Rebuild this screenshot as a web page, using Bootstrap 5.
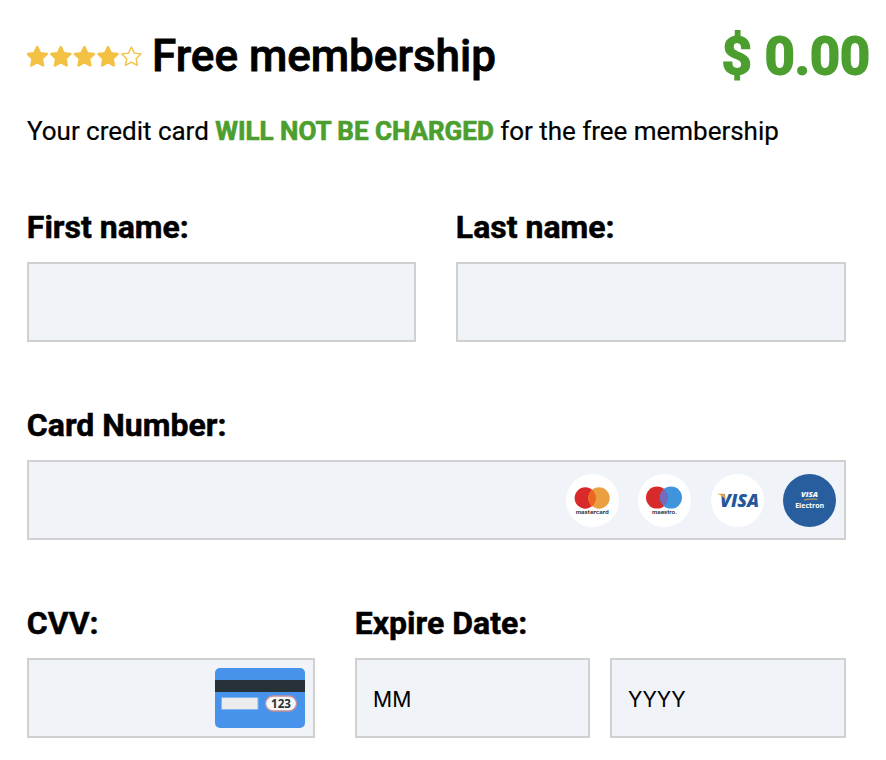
<!DOCTYPE html>
<html lang="en">
<head>
<meta charset="utf-8">
<meta name="viewport" content="width=device-width, initial-scale=1">
<title>Free membership</title>
<link href="https://cdn.jsdelivr.net/npm/bootstrap@5.3.0/dist/css/bootstrap.min.css" rel="stylesheet">
<style>
body { font-family: Roboto, sans-serif; color: #000; background: #fff; }
.page { width: 886px; height: 760px; padding: 26px 16px 0 27px; overflow: hidden; }
.head-row { height: 60px; }
.title { font-size: 44px; font-weight: 500; line-height: 60px; margin-left: 8px; -webkit-text-stroke: .8px; }
.price { font-size: 52.3px; font-weight: 700; line-height: 60px; -webkit-text-stroke: 1.8px; }
.green { color: #4c9f2f; }
.note b { -webkit-text-stroke: .7px; }
.note { font-size: 26px; line-height: 36px; margin-top: 27px; letter-spacing: -.02px; -webkit-text-stroke: .2px; }
.fields { width: 819px; }
.field-label { display: block; font-size: 32px; font-weight: 700; line-height: 40px; margin-bottom: 15px; white-space: nowrap; margin-left: -.2px; -webkit-text-stroke: .5px; }
.name-col { width: 389px; }
.names-row { margin-top: 58px; }
.next-row { margin-top: 63px; }
.field-row { gap: 40px; }
.date-row { gap: 20px; }
.box { height: 80px; border: 2px solid #d0d0d1; border-radius: 0; background: #f0f3f8; padding: 2px 16px 0; color: #000; font: 400 21.2px Inter, sans-serif; }
.box::placeholder { color: #000; opacity: 1; }
.box:focus { background: #f0f3f8; border-color: #9aa4b2; box-shadow: none; }
.brands { top: 13.5px; right: 10px; gap: 19.5px; }
.cvv-art { top: 10px; right: 10px; }
.cvv-col { width: 288px; }
.month-box { width: 235px; }
</style>
</head>
<body>
<svg width="0" height="0" class="position-absolute" aria-hidden="true">
  <symbol id="star" viewBox="0 0 24 24"><path d="M12 2.2 14.9 8.3 21.6 9.2 16.7 13.9 17.9 20.6 12 17.4 6.1 20.6 7.3 13.9 2.4 9.2 9.1 8.3Z" stroke-linejoin="round"/></symbol>
</svg>
<main class="page">
  <header class="head-row d-flex align-items-center">
    <svg width="117" height="26" viewBox="0 0 117 26" fill="#f3c143" stroke="#f3c143" stroke-width="2.4" role="img" aria-label="4 of 5 stars">
      <use href="#star" x="-1.8" y="1.8" width="24" height="24"/>
      <use href="#star" x="21.8" y="1.8" width="24" height="24"/>
      <use href="#star" x="45.4" y="1.8" width="24" height="24"/>
      <use href="#star" x="69" y="1.8" width="24" height="24"/>
      <use href="#star" x="92.4" y="1.8" width="24" height="24" fill="none" stroke-width="1.4"/>
    </svg>
    <h1 class="title mb-0">Free membership</h1>
    <div class="price green ms-auto">$ 0.00</div>
  </header>
  <p class="note mb-0">Your credit card <b class="green">WILL NOT BE CHARGED</b> for the free membership</p>
  <form class="fields">
    <div class="field-row names-row d-flex">
      <div class="name-col"><label class="field-label" for="first">First name:</label><input id="first" class="form-control box"></div>
      <div class="flex-fill"><label class="field-label" for="last">Last name:</label><input id="last" class="form-control box"></div>
    </div>
    <div class="next-row">
      <label class="field-label" for="number">Card Number:</label>
      <div class="position-relative">
        <input id="number" class="form-control box">
        <div class="brands position-absolute d-flex">
          <svg width="53" height="53" viewBox="0 0 53 53"><circle cx="26.5" cy="26.5" r="26.5" fill="#fff"/><circle cx="19.3" cy="24" r="10.7" fill="#d82a29"/><circle cx="33" cy="24" r="10.7" fill="#eaa040"/><path d="M26.15 15.8a10.7 10.7 0 0 1 0 16.4a10.7 10.7 0 0 1 0-16.4Z" fill="#ee6523"/><text x="26.2" y="40" text-anchor="middle" font-family="Inter" font-weight="600" font-size="5.4" textLength="33" lengthAdjust="spacingAndGlyphs" fill="#222">mastercard</text></svg>
          <svg width="53" height="53" viewBox="0 0 53 53"><circle cx="26.5" cy="26.5" r="26.5" fill="#fff"/><circle cx="19" cy="23.6" r="11" fill="#d82a29"/><circle cx="33" cy="23.6" r="11" fill="#4094dc"/><path d="M26 15.1a11 11 0 0 1 0 17a11 11 0 0 1 0-17Z" fill="#756abb"/><text x="26.5" y="40" text-anchor="middle" font-family="Inter" font-weight="600" font-size="5.4" textLength="25" lengthAdjust="spacingAndGlyphs" fill="#222">maestro.</text></svg>
          <svg width="53" height="53" viewBox="0 0 53 53"><circle cx="26.5" cy="26.5" r="26.5" fill="#fff"/><text x="9" y="33" font-family="Open Sans" font-style="italic" font-weight="800" font-size="17.8" textLength="39" lengthAdjust="spacingAndGlyphs" fill="#24569b">VISA</text><path d="M6.7 19.7h5.3q1.5 0 1.9 1.6l1.1 5Q12 21.8 6.7 20Z" fill="#e8a13c"/></svg>
          <svg width="53" height="53" viewBox="0 0 53 53"><circle cx="26.5" cy="26.5" r="26.5" fill="#285e9e"/><text x="18" y="23" font-family="Open Sans" font-style="italic" font-weight="800" font-size="7.5" textLength="17" lengthAdjust="spacingAndGlyphs" fill="#fff">VISA</text><path d="M21 26q6-1.5 13.5-.7" fill="none" stroke="#dca14c" stroke-width="1.1"/><text x="26.7" y="34" text-anchor="middle" font-family="Open Sans" font-weight="700" font-size="7.2" textLength="29" lengthAdjust="spacingAndGlyphs" fill="#fff">Electron</text></svg>
        </div>
      </div>
    </div>
    <div class="field-row next-row d-flex">
      <div class="cvv-col flex-shrink-0">
        <label class="field-label" for="cvv">CVV:</label>
        <div class="position-relative">
          <input id="cvv" class="form-control box">
          <svg class="cvv-art position-absolute" width="90" height="60" viewBox="0 0 90 60"><rect width="90" height="60" rx="5" fill="#4793ec"/><path d="M0 12h90v12H0Z" fill="#263238"/><path d="M6.5 29.5h36.5v12H6.5Z" fill="#ececec" stroke="#85b5ee"/><rect x="50.5" y="28" width="31" height="15" rx="7.5" fill="#f7f7f7" stroke="#c48f99" stroke-width="1.3"/><text x="66" y="39.8" text-anchor="middle" font-family="Open Sans" font-weight="700" font-size="11.5" textLength="20" lengthAdjust="spacingAndGlyphs" fill="#263238">123</text></svg>
        </div>
      </div>
      <div class="flex-grow-1">
        <label class="field-label" for="month">Expire Date:</label>
        <div class="date-row d-flex"><input id="month" class="form-control box month-box flex-shrink-0" placeholder="MM"><input class="form-control box" placeholder="YYYY" aria-label="Year"></div>
      </div>
    </div>
  </form>
</main>
<script src="https://cdn.jsdelivr.net/npm/bootstrap@5.3.0/dist/js/bootstrap.bundle.min.js"></script>
</body>
</html>
